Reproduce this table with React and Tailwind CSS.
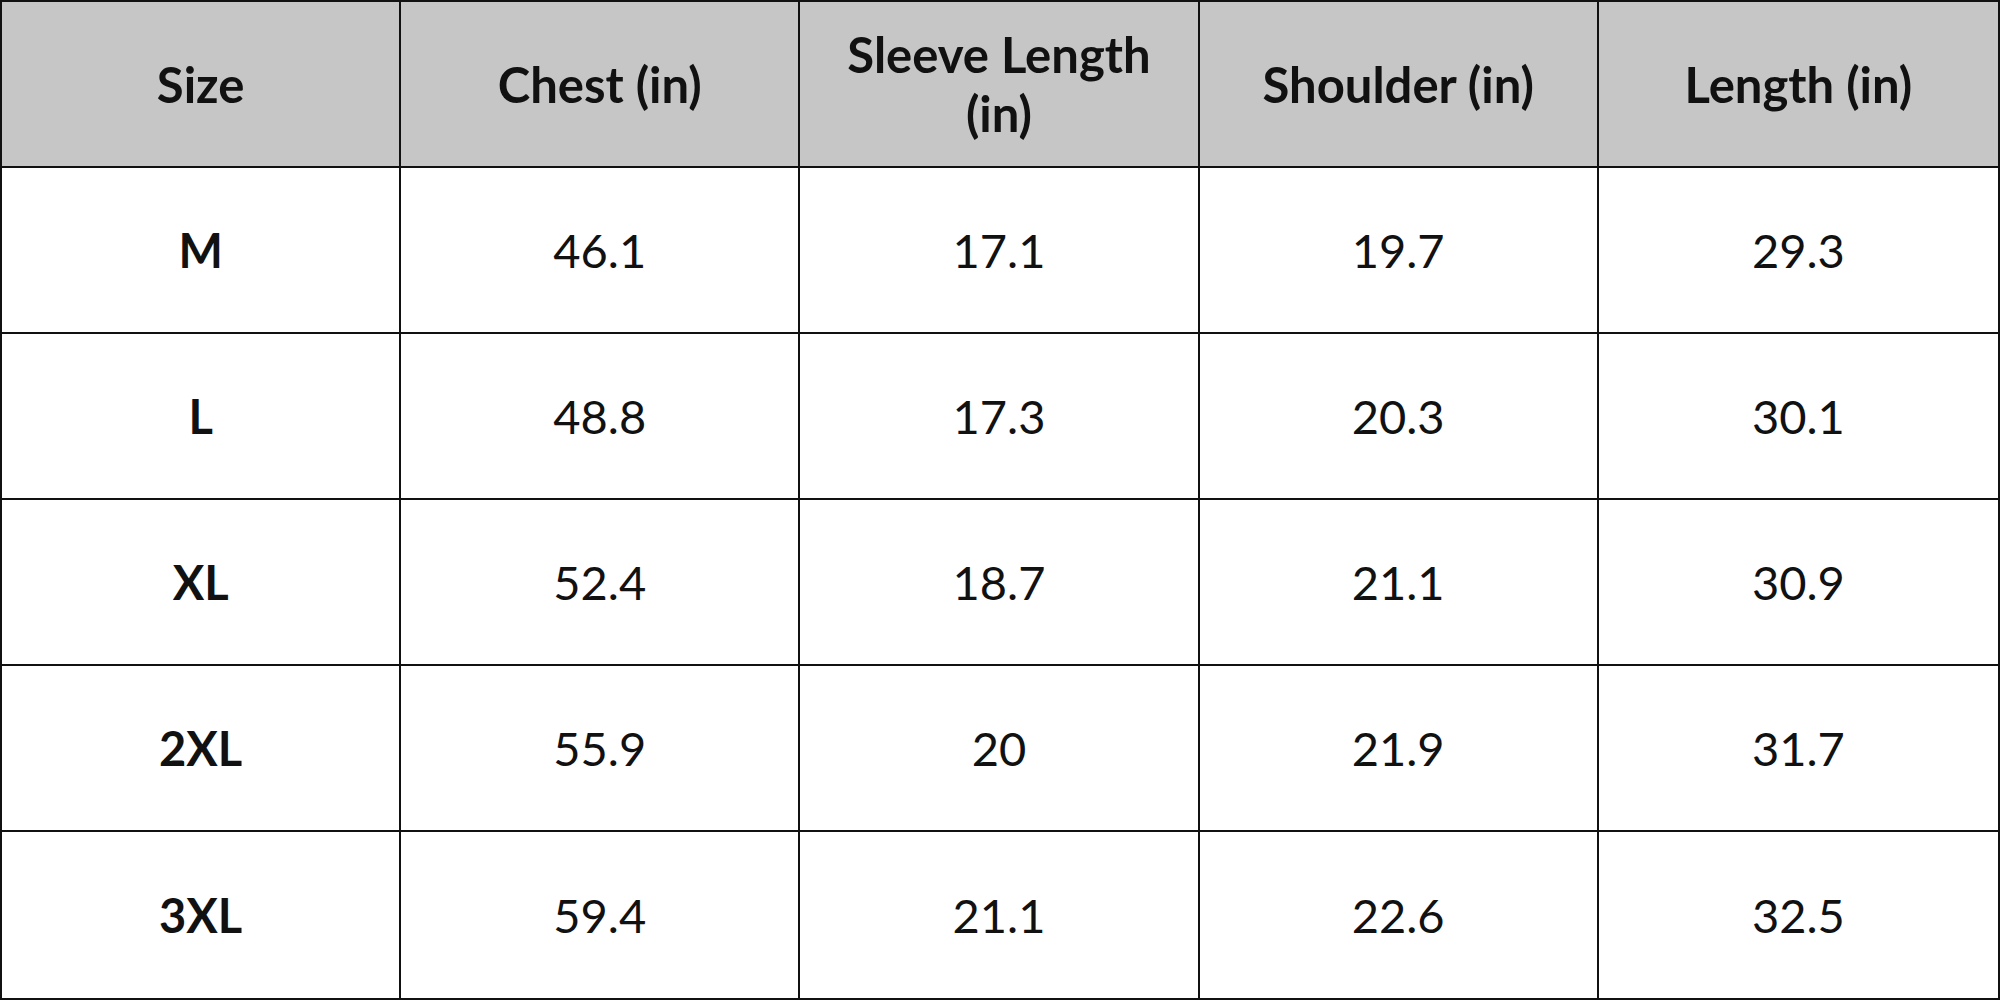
export default function App() {
  const headers = ["Size", "Chest (in)", "Sleeve Length (in)", "Shoulder (in)", "Length (in)"];
  const rows = [
    ["M", "46.1", "17.1", "19.7", "29.3"],
    ["L", "48.8", "17.3", "20.3", "30.1"],
    ["XL", "52.4", "18.7", "21.1", "30.9"],
    ["2XL", "55.9", "20", "21.9", "31.7"],
    ["3XL", "59.4", "21.1", "22.6", "32.5"],
  ];
  return (
    <div className="w-[2000px] h-[1000px] bg-white text-[#111111]" style={{ fontFamily: "Lato, 'Liberation Sans', sans-serif" }}>
      <div className="grid grid-cols-5 grid-rows-6 w-full h-full border-2 border-[#111111]">
        {headers.map((h, i) => (
          <div
            key={h}
            className={`bg-[#c6c6c6] flex items-center justify-center text-center font-bold text-[49px] leading-[59px] px-[45px] border-b-2 border-[#111111] ${i < 4 ? "border-r-2" : ""}`}
          >
            {h}
          </div>
        ))}
        {rows.map((r, ri) =>
          r.map((c, ci) => (
            <div
              key={ri + "-" + ci}
              className={`flex items-center justify-center text-[47px] border-[#111111] ${ci === 0 ? "font-bold" : "font-normal"} ${ci < 4 ? "border-r-2" : ""} ${ri < 4 ? "border-b-2" : ""}`}
            >
              {c}
            </div>
          ))
        )}
      </div>
    </div>
  );
}
